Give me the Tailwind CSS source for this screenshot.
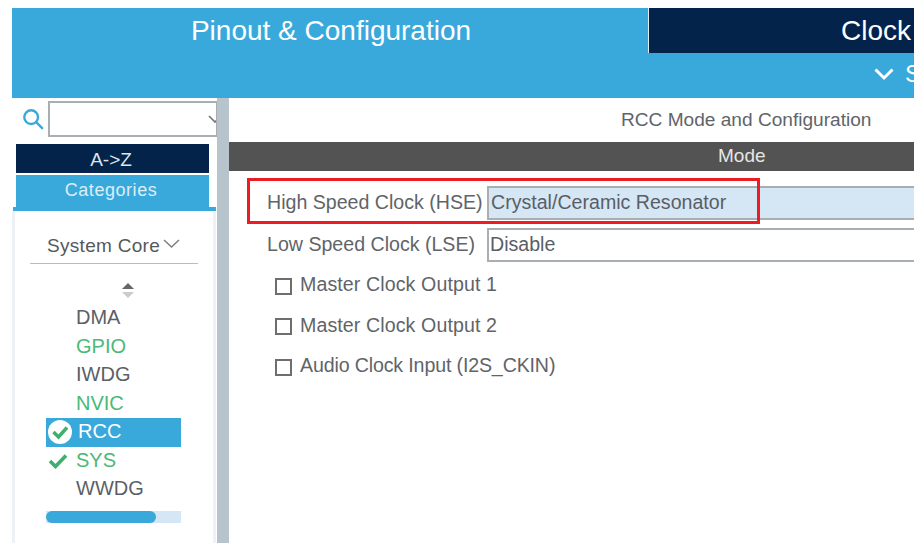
<!DOCTYPE html>
<html><head><meta charset="utf-8">
<script src="https://cdn.jsdelivr.net/npm/@tailwindcss/browser@4"></script>
</head>
<body class="bg-white">
<div class="relative w-[914px] h-[543px] overflow-hidden pt-2 pl-3 font-['Liberation_Sans',Arial,sans-serif] text-[#5f6469]">
  <header class="h-[90px] bg-[#39a9dc] text-white">
    <div class="flex h-[45px]">
      <div class="w-[636px] pt-[6px] pl-[2px] text-center text-[28px] leading-[34px]">Pinout &amp; Configuration</div>
      <div class="flex-1 border-l border-[#dfeef6] bg-[#03234b] pl-[192px] pt-[6px] text-[28px] leading-[34px] whitespace-nowrap overflow-hidden">Clock</div>
    </div>
    <div class="flex items-center h-[45px] pl-[862px] pb-[4px] gap-[11px] overflow-hidden">
      <svg class="w-[20px] h-[14px] shrink-0" viewBox="0 0 20 14" fill="none" stroke="#fff" stroke-width="3"><path d="M1.500 2.500 10 11 18.500 2.500"/></svg>
      <span class="text-[24px] leading-none">S</span>
    </div>
  </header>
  <div class="flex h-[445px]">
    <aside class="w-[205px] shrink-0 flex flex-col">
      <div class="flex items-center h-[46px] pt-[1px] pb-[5px] pl-[10px] gap-[4px]">
        <svg class="w-[22px] h-[22px] shrink-0" viewBox="0 0 24 24" fill="none" stroke="#39a9dc" stroke-width="2.600"><circle cx="10" cy="10" r="7.500"/><path d="M15.500 15.500 22 22" stroke-linecap="round"/></svg>
        <div class="flex-1 h-[36px] mr-[-1px] border-2 border-[#a9aeb3] flex items-center justify-end overflow-hidden">
          <svg class="w-[14px] h-[8px] mr-[-6px] shrink-0" viewBox="0 0 14 8" fill="none" stroke="#777" stroke-width="1.700"><path d="M1 1 7 7 13 1"/></svg>
        </div>
      </div>
      <div class="mx-1 w-[193px] h-[29px] pr-[3px] bg-[#03234b] text-[#dfe5ea] text-center text-[19px] leading-[32px]">A-&gt;Z</div>
      <div class="mx-1 w-[193px] h-[32px] mt-[2px] pr-[3px] bg-[#39a9dc] text-[#dceef8] text-center text-[18px] leading-[30px] tracking-[0.55px]">Categories</div>
      <div class="mx-px w-[203px] h-[4px] bg-[#39a9dc]"></div>
      <div class="flex-1 mr-[1px] border-x-[3px] border-[#eef1f5] flex flex-col">
        <div class="flex items-center h-[53px] mx-[15px] border-b border-[#b9bdc1] pt-[19px] pl-[17px] text-[19px] tracking-[0.3px] text-[#55595e]">
          <span class="whitespace-nowrap">System Core</span>
          <svg class="w-[17px] h-[9px] ml-[3px] mb-[6px] shrink-0" viewBox="0 0 17 9" fill="none" stroke="#7a7e82" stroke-width="1.400"><path d="M1 1 8.500 8 16 1"/></svg>
        </div>
        <div class="flex justify-center h-[19px] mt-[19px] pl-[28px]">
          <svg class="w-[14px] h-[16px]" viewBox="0 0 14 16"><path d="M7 0 13 6H1Z" fill="#666"/><path d="M1 9H13L7 15Z" fill="#c9cccf"/></svg>
        </div>
        <ul class="mt-[2px] ml-[31px] w-[135px] text-[20px] leading-[27px] text-[#5c5f66]">
          <li class="pl-[30px] h-[28.500px]">DMA</li>
          <li class="pl-[30px] h-[28.500px] text-[#4cb878]">GPIO</li>
          <li class="pl-[30px] h-[28.500px]">IWDG</li>
          <li class="pl-[30px] h-[28.500px] text-[#4cb878]">NVIC</li>
          <li class="h-[28.500px] bg-[#39a9dc] text-white flex items-center">
            <svg class="w-[26px] h-[26px] ml-[1px] mr-[5px] shrink-0" viewBox="0 0 26 26"><circle cx="13" cy="13" r="12" fill="#fff"/><path d="M6.500 13 11.500 18 20 8.500" fill="none" stroke="#3fae6e" stroke-width="3.400"/></svg>
            <span class="-mt-px">RCC</span>
          </li>
          <li class="h-[28.500px] text-[#4cb878] flex items-center">
            <svg class="w-[20px] h-[16px] ml-[2px] mr-[8px] shrink-0" viewBox="0 0 20 16"><path d="M2 8 7.500 13.500 18 2.500" fill="none" stroke="#3fae6e" stroke-width="3.600"/></svg>
            <span class="-mt-px">SYS</span>
          </li>
          <li class="pl-[30px] h-[28.500px]">WWDG</li>
        </ul>
        <div class="ml-[31px] mt-[7px] w-[135px] h-[12px] bg-[#d5e6f4]">
          <div class="w-[110px] h-full rounded-full bg-[#39a9dc]"></div>
        </div>
      </div>
    </aside>
    <div class="w-[12px] shrink-0 bg-[#b8c4cc]"></div>
    <main class="flex-1 min-w-0">
      <div class="h-[44px] pl-[392px] pt-[4px] text-[19.100px] leading-[36px] whitespace-nowrap">RCC Mode and Configuration</div>
      <div class="h-[29px] bg-[#525352] text-[#e6e6e6] text-[19px] leading-[28px] pl-[489px] whitespace-nowrap">Mode</div>
      <div class="flex items-center mt-[14px] h-[36px] pl-[38px] text-[19.600px] whitespace-nowrap">
        <span class="w-[220px]">High Speed Clock (HSE)</span>
        <div class="flex-1 h-[34px] pl-[2px] bg-[#d5e6f4] border-y-2 border-l-2 border-[#a9aeb3] leading-[28px] text-[#5a5e66]">Crystal/Ceramic Resonator</div>
      </div>
      <div class="flex items-center mt-[6px] h-[36px] pl-[38px] text-[19.600px] whitespace-nowrap">
        <span class="w-[220px]">Low Speed Clock (LSE)</span>
        <div class="flex-1 h-[34px] pl-[1px] border-y-2 border-l-2 border-[#a9aeb3] leading-[28px] text-[#5a5e66]">Disable</div>
      </div>
      <div class="mt-[2px] pl-[46px] text-[19.600px] whitespace-nowrap">
        <label class="flex items-center gap-[8px] h-[40px] tracking-[0.1px]"><span class="w-[17px] h-[17px] border-2 border-[#6e6e6e] shrink-0 mt-[2px]"></span>Master Clock Output 1</label>
        <label class="flex items-center gap-[8px] h-[41px] tracking-[0.1px]"><span class="w-[17px] h-[17px] border-2 border-[#6e6e6e] shrink-0 mt-[2px]"></span>Master Clock Output 2</label>
        <label class="flex items-center gap-[8px] h-[40px] tracking-[-0.14px]"><span class="w-[17px] h-[17px] border-2 border-[#6e6e6e] shrink-0 mt-[2px]"></span>Audio Clock Input (I2S_CKIN)</label>
      </div>
    </main>
  </div>
  <div class="absolute left-[247px] top-[178px] w-[513px] h-[46px] border-[3px] border-[#ed1c24]"></div>
</div>
</body></html>
